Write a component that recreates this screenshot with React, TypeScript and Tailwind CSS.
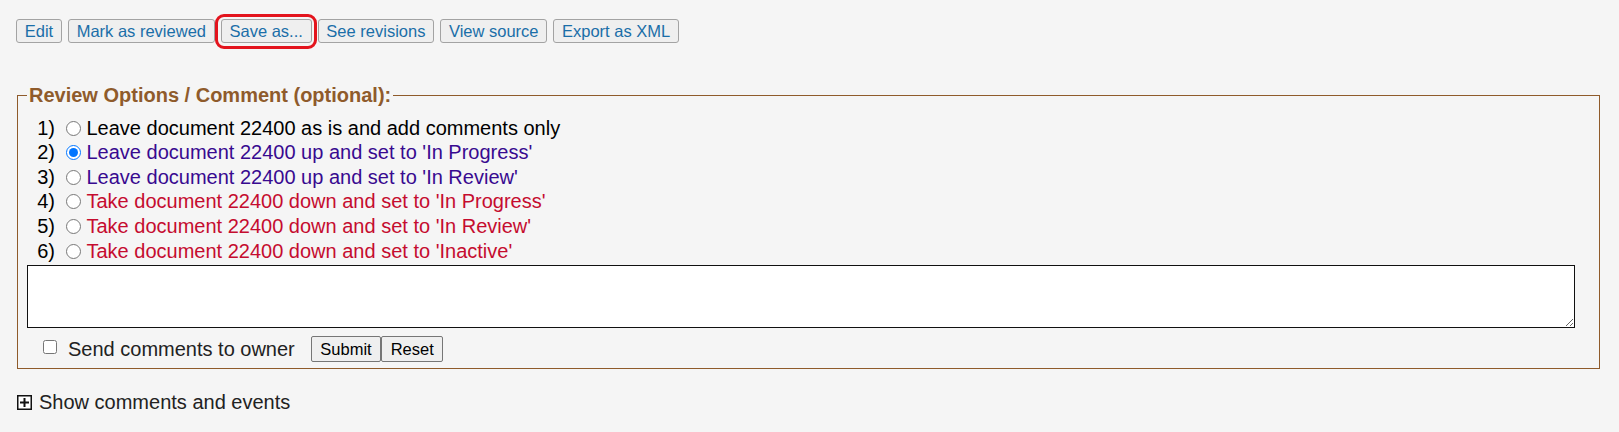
import React from "react";

const actions = ["Edit", "Mark as reviewed", "Save as...", "See revisions", "View source", "Export as XML"];

const options = [
  { text: "Leave document 22400 as is and add comments only", color: "text-black" },
  { text: "Leave document 22400 up and set to 'In Progress'", color: "text-[#380a90]", checked: true },
  { text: "Leave document 22400 up and set to 'In Review'", color: "text-[#380a90]" },
  { text: "Take document 22400 down and set to 'In Progress'", color: "text-[#c50c2f]" },
  { text: "Take document 22400 down and set to 'In Review'", color: "text-[#c50c2f]" },
  { text: "Take document 22400 down and set to 'Inactive'", color: "text-[#c50c2f]" },
];

function PlusBox() {
  return (
    <svg width="15" height="15" viewBox="0 0 15 15" className="shrink-0">
      <rect x="0.75" y="0.75" width="13.5" height="13.5" fill="#fff" stroke="#111" strokeWidth="1.5" />
      <path d="M7.5 3v9M3 7.5h9" stroke="#111" strokeWidth="2" />
    </svg>
  );
}

export default function App() {
  return (
    <div className="min-h-screen bg-[#f5f5f5] font-['Liberation_Sans',Arial,sans-serif] text-black">
      <div className="flex gap-[6px] pl-[16px] pt-[19px]">
        {actions.map((label) => (
          <span key={label} className="relative">
            <button className="h-[24px] px-[7.75px] rounded-[3px] border border-[#a3a3a3] bg-[#efefef] text-[16.5px] leading-none text-[#1a6ea8]">
              {label}
            </button>
            {label === "Save as..." && (
              <span className="pointer-events-none absolute -left-[6px] -right-[5px] -top-[5px] -bottom-[5px] rounded-[9px] border-[3.5px] border-[#e3141d]" />
            )}
          </span>
        ))}
      </div>

      <fieldset className="ml-[17px] mr-[19px] mt-[40px] border border-[#8f5b2b] px-[9px] pt-[9px] pb-[6px]">
        <legend className="px-[2px] text-[20px] leading-[23px] font-bold text-[#8f5b2b]">
          Review Options / Comment (optional):
        </legend>

        <div className="flex flex-col">
          {options.map((o, i) => (
            <label key={i} className="flex h-[24.6px] items-center text-[20px] leading-[23px]">
              <span className="w-[28px] text-right">{i + 1})</span>
              <input
                type="radio"
                name="review"
                defaultChecked={o.checked}
                className="m-0 ml-[11px] h-[15px] w-[15px]"
              />
              <span className={`ml-[5.5px] ${o.color}`}>{o.text}</span>
            </label>
          ))}
        </div>

        <textarea className="mt-[2px] block h-[63px] w-[1548px] border border-[#111] bg-white" />

        <div className="mt-[8px] flex h-[26px] items-center">
          <input type="checkbox" className="m-0 ml-[16px] mb-[5px] h-[14px] w-[14px]" />
          <span className="ml-[11px] text-[20px] leading-[23px] text-[#222]">Send comments to owner</span>
          <button className="ml-[16px] h-[26px] px-[8.5px] rounded-[2px] border border-[#767676] bg-[#efefef] text-[16.5px] leading-none">
            Submit
          </button>
          <button className="h-[26px] px-[8.5px] rounded-[2px] border border-[#767676] bg-[#efefef] text-[16.5px] leading-none">
            Reset
          </button>
        </div>
      </fieldset>

      <div className="ml-[17px] mt-[22px] flex items-center gap-[7px] text-[20px] leading-[23px] text-[#222]">
        <PlusBox />
        <span>Show comments and events</span>
      </div>
    </div>
  );
}
